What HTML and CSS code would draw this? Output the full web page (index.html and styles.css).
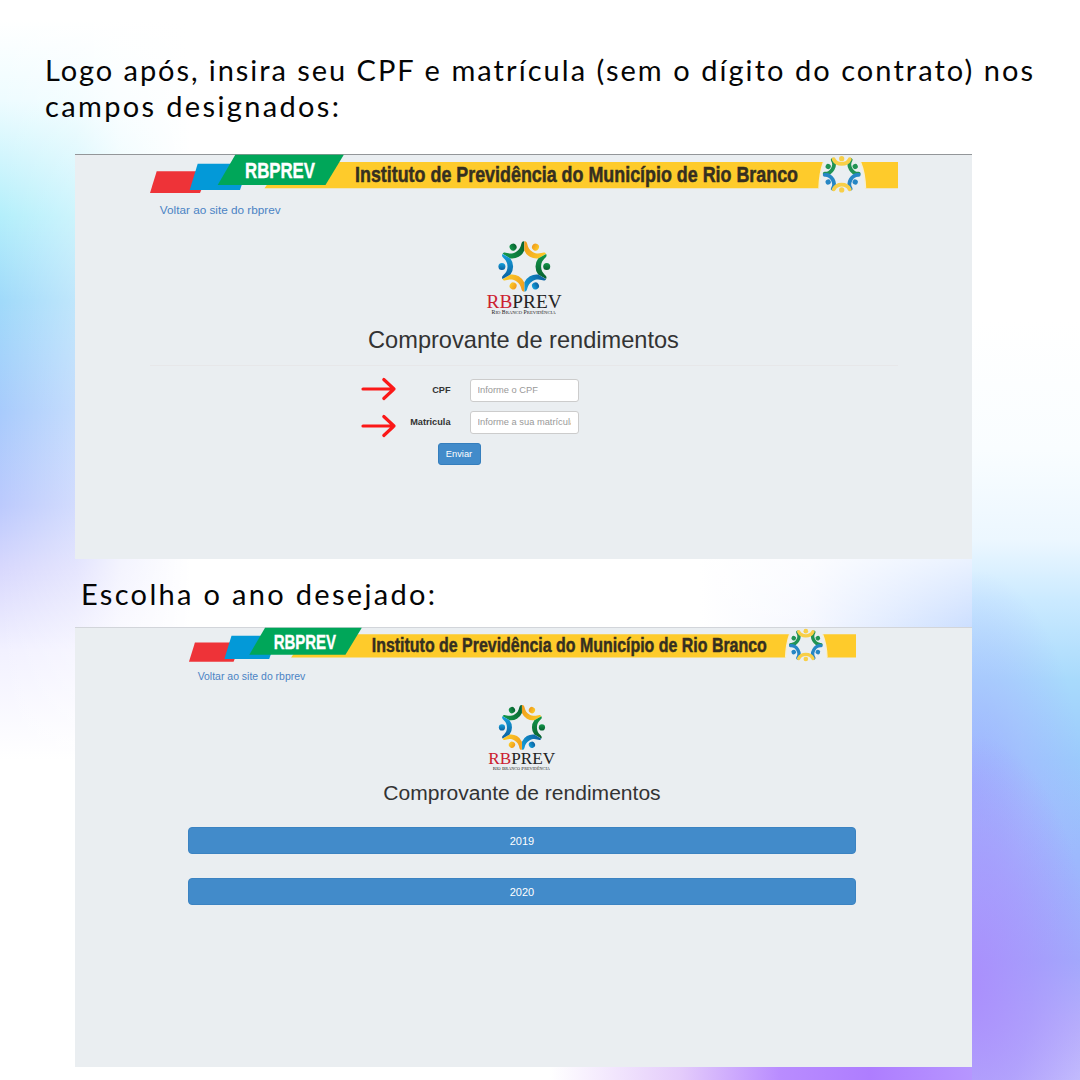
FILE: index.html
```html
<!DOCTYPE html>
<html lang="pt-BR">
<head>
<meta charset="utf-8">
<title>Comprovante de rendimentos</title>
<link rel="stylesheet" href="styles.css">
</head>
<body>
<svg class="defs" width="0" height="0" aria-hidden="true">
  <defs>
    <linearGradient id="g-green" x1="0" y1="0" x2="1" y2="0"><stop offset="0" stop-color="#13984a"/><stop offset="1" stop-color="#07602f"/></linearGradient>
    <linearGradient id="g-gold" x1="0" y1="0" x2="1" y2="0"><stop offset="0" stop-color="#f09a1c"/><stop offset="1" stop-color="#fccb26"/></linearGradient>
    <linearGradient id="g-blue" x1="0" y1="0" x2="1" y2="0"><stop offset="0" stop-color="#0b5f9e"/><stop offset="1" stop-color="#14a0dc"/></linearGradient>
    <g id="person">
      <circle cx="0" cy="-22.4" r="3.5"/>
      <path d="M-12.5-21.8C-8.6-24.2-8.4-16.8 0-16.8C8.4-16.8 8.6-24.2 12.5-21.8L8-13.9Q4.5-11.2 0-11.2Q-4.5-11.2-8-13.9Z"/>
    </g>
    <g id="mini">
      <circle cx="0" cy="-15.6" r="2.6"/>
      <path d="M-8-15C-5.8-10.6-3-10.4 0-10.4C3-10.4 5.8-10.6 8-15" fill="none" stroke="currentColor" stroke-width="3.8" stroke-linecap="round"/>
    </g>
    <symbol id="banner" viewBox="0 0 749 40">
      <path d="M7.7 17.3H60L51 39H1Z" fill="#ee3338"/>
      <path d="M48.7 9.8H100L91 36H40.7Z" fill="#0399d8"/>
      <path d="M134 8H674.5Q670.5 19 670 34.3H115.5Z" fill="#fecb2b"/>
      <path d="M711.5 8H749V34.3H716.5Q716 19 711.5 8Z" fill="#fecb2b"/>
      <path d="M674.5 8Q670.5 19 670 34.3M711.5 8Q716 19 716.5 34.3" fill="none" stroke="#f6efd2" stroke-width="1.5"/>
      <path d="M86.3.8H194.8L176.5 31H68.7Z" fill="#00a659"/>
      <text x="96" y="24.3" textLength="70" lengthAdjust="spacingAndGlyphs" font-size="22.5" font-weight="700" fill="#fff" stroke="#fff" stroke-width=".4">RBPREV</text>
      <text x="206" y="28.3" textLength="443" lengthAdjust="spacingAndGlyphs" font-size="22" font-weight="700" fill="#352f20" stroke="#352f20" stroke-width=".5">Instituto de Previdência do Município de Rio Branco</text>
      <g transform="translate(692.7 20.3)">
        <use href="#mini" fill="#209354" color="#209354" transform="rotate(60)"/>
        <use href="#mini" fill="#209354" color="#209354" transform="rotate(-60)"/>
        <use href="#mini" fill="#2686c4" color="#2686c4" transform="rotate(120)"/>
        <use href="#mini" fill="#2686c4" color="#2686c4" transform="rotate(-120)"/>
        <use href="#mini" fill="#f8cf48" color="#f8cf48"/>
        <use href="#mini" fill="#f8cf48" color="#f8cf48" transform="rotate(180)"/>
      </g>
    </symbol>
    <symbol id="logo" viewBox="0 0 80 80">
      <g transform="translate(40.3 28.5)">
        <use href="#person" fill="url(#g-green)" transform="rotate(-30)"/>
        <use href="#person" fill="url(#g-gold)" transform="rotate(30)"/>
        <use href="#person" fill="url(#g-green)" transform="rotate(90)"/>
        <use href="#person" fill="url(#g-blue)" transform="rotate(150)"/>
        <use href="#person" fill="url(#g-gold)" transform="rotate(210)"/>
        <use href="#person" fill="url(#g-blue)" transform="rotate(270)"/>
      </g>
      <text class="serif" x="2.6" y="69.8" textLength="75" lengthAdjust="spacingAndGlyphs" font-size="19.5" fill="#242424"><tspan fill="#cc2030">RB</tspan>PREV</text>
      <text class="serif" x="7.6" y="75.8" textLength="64" lengthAdjust="spacingAndGlyphs" font-size="5.6" fill="#222">R<tspan font-size="4.6">IO</tspan> B<tspan font-size="4.6">RANCO</tspan> P<tspan font-size="4.6">REVIDÊNCIA</tspan></text>
    </symbol>
    <symbol id="arrow" viewBox="0 0 36 24">
      <path d="M2 12H33M22.8 2.5L33 12L22.8 21.5" fill="none" stroke="#fb1818" stroke-width="3.2" stroke-linecap="round" stroke-linejoin="round"/>
    </symbol>
  </defs>
</svg>
<main class="page">
  <h1 class="step step-first"><span class="line-one"><span class="opening">Logo após, insira seu</span> CPF e matrícula (sem o dígito do contrato) nos</span><br><span class="line-two">campos designados:</span></h1>

  <section class="panel panel-form">
    <svg class="banner"><use href="#banner"/></svg>
    <a class="back">Voltar ao site do rbprev</a>
    <svg class="logo"><use href="#logo"/></svg>
    <h2 class="title">Comprovante de rendimentos</h2>
    <form class="form">
      <div class="row"><svg class="arrow"><use href="#arrow"/></svg><label for="cpf">CPF</label><input id="cpf" placeholder="Informe o CPF"></div>
      <div class="row row-second"><svg class="arrow"><use href="#arrow"/></svg><label for="mat">Matricula</label><input id="mat" placeholder="Informe a sua matrícula"></div>
      <button class="send" type="button">Enviar</button>
    </form>
  </section>

  <h1 class="step step-second">Escolha o ano desejado:</h1>

  <section class="panel panel-years">
    <svg class="banner"><use href="#banner"/></svg>
    <a class="back">Voltar ao site do rbprev</a>
    <svg class="logo"><use href="#logo"/></svg>
    <h2 class="title">Comprovante de rendimentos</h2>
    <div class="years">
      <button class="year" type="button">2019</button>
      <button class="year" type="button">2020</button>
    </div>
  </section>
</main>
</body>
</html>
```
FILE: styles.css
```css
* { box-sizing: border-box; }

body { margin: 0; }

.defs { position: absolute; }

.page {
  width: 1080px;
  height: 1080px;
  padding: 52px 0 0 45px;
  overflow: hidden;
  font-family: "Liberation Sans", Arial, sans-serif;
  background:
    /* left edge: horizontal fade over a vertical colour run */
    linear-gradient(90deg, #fff0, #fff5 75px, #ffffffb8 120px, #fff 190px) 0 0 / 190px 780px no-repeat,
    linear-gradient(#fff 20px, #eefcff 100px, #b4effb 215px, #a0dafa 300px, #a8cbfc 412px, #bccafd 506px, #d8d8fd 569px, #f2f1ff 650px, #fff 760px) 0 0 / 190px 780px no-repeat,
    /* gap between the panels */
    linear-gradient(#fff9, #fff0) 700px 559px / 272px 68px no-repeat,
    linear-gradient(90deg, #fff, #f6f8ff 40%, #ccdfff) 700px 559px / 272px 68px no-repeat,
    /* bottom edge */
    linear-gradient(90deg, #fff, #e4ccfb 130px, #b98cff 230px, #ae7dff 320px, #b696ff 422px) 550px 1067px / 422px 13px no-repeat,
    /* right edge */
    radial-gradient(ellipse 120px 250px at 0 985px, #aa8cfce8, #a893fca0 50%, #a893fc00) 972px 0 / 108px 1080px no-repeat,
    radial-gradient(ellipse 110px 220px at 0 790px, #a0a8ffb0, #a8b4ff70 50%, #b0b8ff00) 972px 0 / 108px 1080px no-repeat,
    linear-gradient(#fff 320px, #f9fdff 450px, #ecf7ff 540px, #cbeaff 600px, #a8dafc 680px, #9bcafc 760px, #9db8fd 860px, #a2aafc 960px, #b8b0fc 1025px, #c3bcfd 1080px) 972px 0 / 108px 1080px no-repeat,
    #fff;
}

.step {
  margin: 0;
  color: #050505;
  font: 400 29px/36px Lato, sans-serif;
  white-space: nowrap;
}
.step-first { height: 102px; }
.line-one { letter-spacing: 2.05px; }
.opening { letter-spacing: 1.93px; }
.line-two { letter-spacing: 2.35px; }
.step-second { height: 68px; padding: 17px 0 0 36px; letter-spacing: 2.32px; }

.panel {
  display: flex;
  flex-direction: column;
  align-items: center;
  width: 897px;
  margin-left: 30px;
  background: #eaeef1;
}
.panel-form { height: 405px; font-size: 10px; border-top: 1px solid #939699; }
.panel-years { height: 440px; padding-right: 3px; font-size: 8.92px; border-top: 1px solid #d2d5da; }

.banner { width: 74.9em; height: 4em; margin-top: -1px; }
.serif { font-family: "Liberation Serif", "Times New Roman", serif; }

.back {
  align-self: flex-start;
  margin: .72em 0 0 7.22em;
  color: #4a83c4;
  font-size: 1.175em;
  line-height: 1.35em;
}
.panel-years .back { margin-left: 11.7em; }

.logo { width: 8em; height: 8em; margin-top: 2em; }

.title {
  margin: 0;
  padding-top: .24em;
  color: #333;
  font-size: 2.36em;
  line-height: 1.36em;
  font-weight: 400;
  white-space: nowrap;
}

.form {
  display: flex;
  flex-direction: column;
  gap: 10px;
  width: 748px;
  margin-top: 9px;
  padding: 13px 0 0 211px;
  border-top: 1px solid #e7e7e9;
}
.row { display: flex; align-items: center; height: 22px; }
.arrow { width: 36px; height: 24px; margin-top: -2px; }
.row-second .arrow { margin-top: 8px; }
.row label { width: 54px; color: #333; font-size: 9.2px; font-weight: 700; text-align: right; }
.row input {
  width: 109px;
  height: 23px;
  margin-left: 19px;
  padding: 0 7px;
  border: 1px solid #ccc;
  border-radius: 3px;
  background: #fff;
  font: 9.3px "Liberation Sans", Arial, sans-serif;
}
.row input::placeholder { color: #999; opacity: 1; }
.send {
  width: 43px;
  height: 22px;
  margin-left: 77px;
  padding: 0;
  border: 1px solid #357ebd;
  border-radius: 3px;
  color: #fff;
  background: #428bca;
  font: 9.3px "Liberation Sans", Arial, sans-serif;
}

.years { display: flex; flex-direction: column; gap: 24px; width: 668px; margin-top: 20px; }
.year {
  height: 27px;
  padding: 0;
  border: 1px solid #3b83c2;
  border-radius: 4px;
  color: #fff;
  background: #428bca;
  font: 11px "Liberation Sans", Arial, sans-serif;
}
```
